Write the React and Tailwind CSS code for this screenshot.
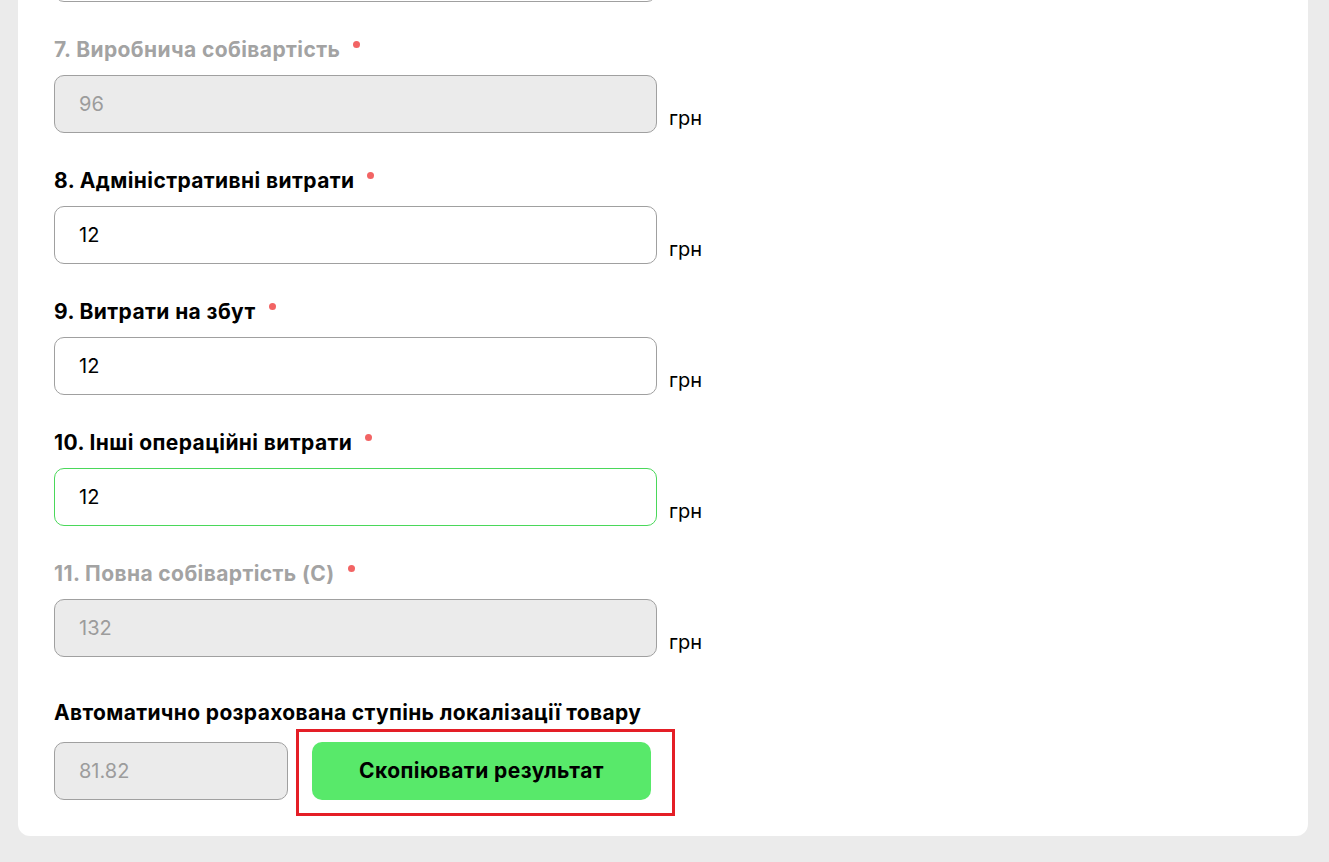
const fields = [
  { n: '7. Виробнича собівартість', v: '96', disabled: true },
  { n: '8. Адміністративні витрати', v: '12' },
  { n: '9. Витрати на збут', v: '12' },
  { n: '10. Інші операційні витрати', v: '12', focus: true },
  { n: '11. Повна собівартість (С)', v: '132', disabled: true },
];

function Field({ n, v, disabled, focus }) {
  return (
    <div className="flex flex-col">
      <div className="flex items-start h-6">
        <span className={`text-[21px] leading-6 font-bold tracking-[0.4px] ${disabled ? 'text-[#a3a3a3]' : 'text-black'}`}>{n}</span>
        <span className="ml-[13px] mt-[3px] w-[7px] h-[7px] rounded-full bg-[#f26464]" />
      </div>
      <div className="flex items-end gap-3 mt-[13px]">
        <div
          className={`w-[603px] h-[58px] rounded-[10px] border flex items-center pl-6 text-[20px] ${
            disabled
              ? 'bg-[#ebebeb] border-[#a0a0a0] text-[#9c9c9c]'
              : focus
              ? 'bg-white border-[#4ad85a] text-black'
              : 'bg-white border-[#a0a0a0] text-black'
          }`}
        >
          {v}
        </div>
        <span className="text-[20px] leading-6 mb-[3px] text-black">грн</span>
      </div>
    </div>
  );
}

export default function App() {
  return (
    <div className="min-h-screen bg-[#ebebeb] pl-[18px] pr-[21px] pb-[26px] overflow-hidden font-['Inter',sans-serif]">
      <div className="bg-white rounded-b-[12px] px-[36px] pb-[20px]">
        <div className="-mt-[56px] w-[603px] h-[58px] rounded-[10px] border border-[#a0a0a0] bg-white" />
        <div className="flex flex-col gap-[36px] mt-[36px]">
          {fields.map((f) => (
            <Field key={f.n} {...f} />
          ))}
        </div>
        <div className="mt-[44px] text-[21px] leading-6 font-bold tracking-[0.35px] text-black">
          Автоматично розрахована ступінь локалізації товару
        </div>
        <div className="flex items-start mt-[4px]">
          <div className="mt-[13px] w-[234px] h-[58px] rounded-[10px] border border-[#a0a0a0] bg-[#ebebeb] flex items-center pl-6 text-[20px] text-[#9c9c9c]">
            81.82
          </div>
          <div className="ml-[8px] border-[3px] border-[#e41e26] pt-[10px] pl-[13px] pr-[21px] pb-[13px]">
            <button className="w-[339px] h-[58px] rounded-[10px] bg-[#58e96a] text-[21px] font-bold tracking-[0.45px] text-black">
              Скопіювати результат
            </button>
          </div>
        </div>
      </div>
    </div>
  );
}
